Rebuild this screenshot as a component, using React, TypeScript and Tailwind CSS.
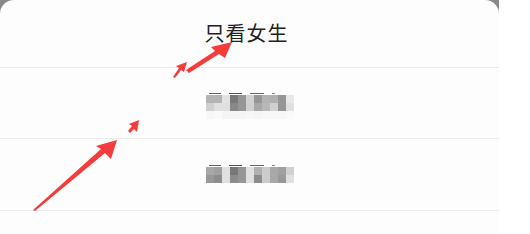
import React from "react"

const mosaicA = [
  ["#b4b4b4", "#b4b4b4", "#e2e2e2", "#787878", "#969696", "#d2d2d2", "#969696", "#b4b4b4", "#b0b0b0", "#969696", "#e8e8e8"],
  ["#d0d0d0", "#e0e0e0", "#e0e0e0", "#888888", "#969696", "#d0d0d0", "#a8a8a8", "#b8b8b8", "#d0d0d0", "#969696", "#e0e0e0"],
  ["#f7f7f7", "#fafafa", "#f5f5f5", "#f5f5f5", "#f5f5f5", "#f7f7f7", "#f5f5f5", "#f7f7f7", "#f8f8f8", "#f7f7f7", "#fafafa"],
]

const mosaicB = [
  ["#a8a8a8", "#a0a0a0", "#e0e0e0", "#787878", "#969696", "#e0e0e0", "#b0b0b0", "#cccccc", "#a8a8a8", "#a0a0a0", "#d0d0d0"],
  ["#989898", "#8c8c8c", "#e0e0e0", "#8c8c8c", "#969696", "#e0e0e0", "#8c8c8c", "#cccccc", "#a8a8a8", "#989898", "#e0e0e0"],
]

function Mosaic({ cells }: { cells: string[][] }) {
  return (
    <div className="flex flex-col">
      {/* bits of the characters' top strokes left over above the blur */}
      <div className="flex h-[1px] gap-[8px] pl-[3px] mb-[1px]">
        <div className="w-[12px] bg-[#666]" />
        <div className="w-[13px] bg-[#555]" />
        <div className="w-[14px] bg-[#666]" />
        <div className="w-[3px] bg-[#888]" />
      </div>
      {cells.map((row, r) => (
        <div key={r} className="flex">
          {row.map((c, i) => (
            <div key={i} className="w-[8px] h-[8px]" style={{ backgroundColor: c }} />
          ))}
        </div>
      ))}
    </div>
  )
}

function Arrows() {
  return (
    <svg className="absolute left-0 top-0 pointer-events-none" width="530" height="234" viewBox="0 0 530 234">
      <g fill="#f53b3b">
        {/* top arrow */}
        <polygon points="232,42 225,58 219,54 189,73 186,70 215,51 211,47" />
        <polygon points="187,62 184,72 181,70 175,78 173,77 179,68 176,66" />
        {/* little piece */}
        <polygon points="139,120 137,132 134,129 130,133 128,131 132,126 129,124" />
        {/* big arrow */}
        <polygon points="117,140 111,159 105,153 35,211 33,210 101,149 96,146" />
      </g>
    </svg>
  )
}

export default function App() {
  return (
    <div className="relative w-[530px] h-[234px] bg-white overflow-hidden" style={{ fontFamily: '"Noto Sans CJK SC", "Noto Sans", sans-serif' }}>
      <div className="w-[499px] h-full bg-[#8a8a8a]">
        <div className="h-full bg-[#fdfdfd] rounded-t-[14px] flex flex-col">
          <div className="h-[68px] shrink-0 border-b border-[#e9e9e9] flex items-center justify-center">
            <span className="text-[20px] leading-none text-[#222] tracking-[1px] pb-[2px] pr-[6px]">只看女生</span>
          </div>
          <div className="h-[71px] shrink-0 border-b border-[#ececec] flex items-start justify-center pt-[25px]">
            <Mosaic cells={mosaicA} />
          </div>
          <div className="h-[72px] shrink-0 border-b border-[#ececec] flex items-start justify-center pt-[26px]">
            <Mosaic cells={mosaicB} />
          </div>
          <div className="flex-1" />
        </div>
      </div>
      <Arrows />
    </div>
  )
}
